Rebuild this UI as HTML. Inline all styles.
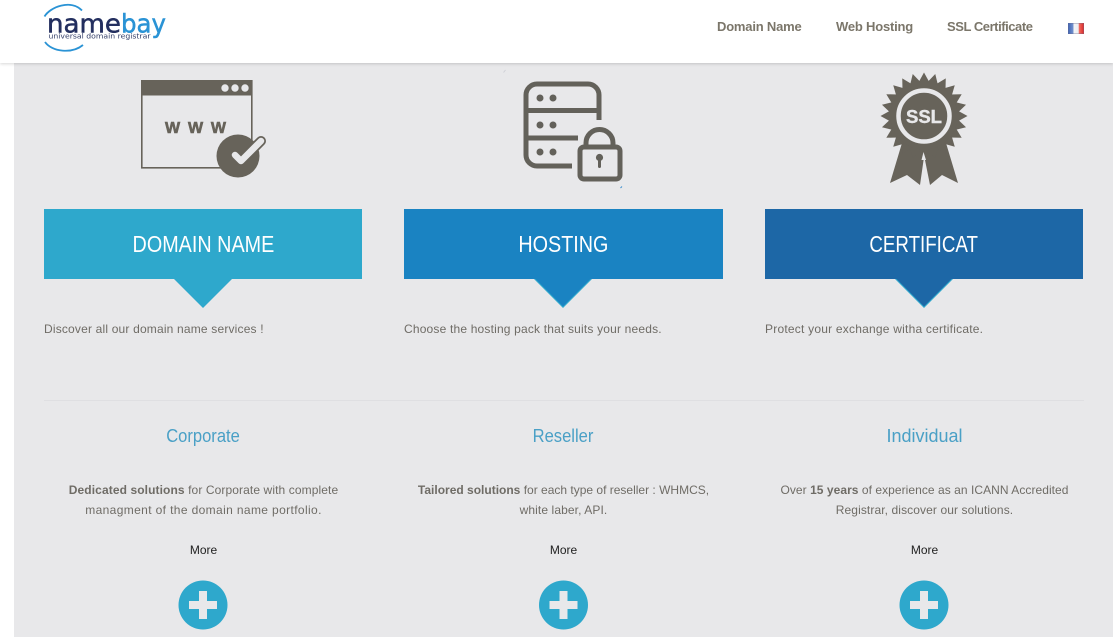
<!DOCTYPE html>
<html lang="en">
<head>
<meta charset="utf-8">
<title>Namebay</title>
<style>
html,body{margin:0;padding:0;background:#fff}
body{width:1113px;height:637px;overflow:hidden;position:relative;font-family:"Liberation Sans",sans-serif}
.main{position:absolute;left:14px;top:63px;width:1099px;height:574px;background:#e8e8ea}
.head{position:absolute;left:0;top:0;width:1113px;height:63px;background:#fff;box-shadow:0 1px 3px rgba(0,0,0,.16)}
.t{position:absolute;white-space:nowrap}
.nav{top:18px;font-size:13px;line-height:17px;font-weight:bold;color:#7b766a}
.flag{position:absolute;left:1068px;top:23px;width:16px;height:11px;background:linear-gradient(90deg,#3b62b4 0,#6f8ecb 30%,#f4f4f6 38%,#eceef2 64%,#f06a60 70%,#d92626 100%);box-shadow:inset 0 0 0 1px rgba(110,110,140,.35)}
.box{position:absolute;top:209px;height:70px;color:#fff;text-align:center;font-size:23px;line-height:71px}
.box span{display:inline-block;transform:scaleX(.86)}
.desc{top:321px;font-size:12px;line-height:16px;color:#6f6c66}
.title{width:319px;top:426px;font-size:18px;line-height:21px;text-align:center;color:#4aa0c6}
.title span{display:inline-block;transform:scaleX(.92)}
.copy{width:319px;top:480px;font-size:12px;line-height:20px;text-align:center;color:#6f6c66;white-space:normal}
.more{width:319px;top:542px;font-size:12px;line-height:16px;text-align:center;color:#222}
svg{position:absolute;left:0;top:0}
</style>
</head>
<body>
<div class="main"></div>
<div class="head"></div>

<svg width="1113" height="637" viewBox="0 0 1113 637" xmlns="http://www.w3.org/2000/svg">
  <!-- logo -->
  <path d="M44.500 16.500C50 7 71 -1 82 10.500" fill="none" stroke="#2a93d5" stroke-width="1.800"/>
  <path d="M45 42C52 52 72 54 83 45" fill="none" stroke="#2a93d5" stroke-width="1.800"/>
  <text x="47" y="32.500" font-family="DejaVu Sans" font-size="25.500" fill="#232f5f" stroke="#232f5f" stroke-width=".5" textLength="74" lengthAdjust="spacingAndGlyphs">name</text>
  <text x="121" y="32.500" font-family="DejaVu Sans" font-size="25.500" fill="#2a93d5" stroke="#2a93d5" stroke-width=".5" textLength="45" lengthAdjust="spacingAndGlyphs">bay</text>
  <text x="48.500" y="38.500" font-family="DejaVu Sans" font-size="6.800" fill="#35406a" textLength="102" lengthAdjust="spacingAndGlyphs">universal domain registrar</text>

  <!-- www icon -->
  <rect x="141.800" y="80.800" width="110" height="87" fill="none" stroke="#67635a" stroke-width="1.600"/>
  <rect x="141" y="80" width="111.500" height="15.500" fill="#67635a"/>
  <circle cx="225" cy="88" r="3.700" fill="#e8e8ea"/>
  <circle cx="235" cy="88" r="3.700" fill="#e8e8ea"/>
  <circle cx="245" cy="88" r="3.700" fill="#e8e8ea"/>
  <text x="165" y="133" font-family="Liberation Sans" font-weight="bold" font-size="16" fill="#67635a" stroke="#67635a" stroke-width=".6" textLength="61" lengthAdjust="spacing">WWW</text>
  <circle cx="238" cy="156" r="21.500" fill="#67635a"/>
  <path d="M235 155L241 161L261 141" fill="none" stroke="#67635a" stroke-width="10" stroke-linecap="round" stroke-linejoin="round"/>
  <path d="M235 155L241 161L261 141" fill="none" stroke="#e8e8ea" stroke-width="6.500" stroke-linecap="round" stroke-linejoin="round"/>

  <!-- server icon -->
  <g fill="none" stroke="#63615a" stroke-width="5">
    <path d="M572 166H537a11 11 0 0 1-11-11V95a11 11 0 0 1 11-11H588a11 11 0 0 1 11 11V120"/>
    <path d="M526 110.500H599M526 138H578"/>
    <rect x="580" y="147" width="40" height="32" rx="4"/>
    <path d="M586 147V143a13.500 13.500 0 0 1 27 0V147"/>
  </g>
  <g fill="#63615a">
    <circle cx="540" cy="98" r="3.500"/><circle cx="553" cy="98" r="3.500"/>
    <circle cx="540" cy="125" r="3.500"/><circle cx="553" cy="125" r="3.500"/>
    <circle cx="540" cy="152" r="3.500"/><circle cx="553" cy="152" r="3.500"/>
    <circle cx="599.500" cy="157.500" r="3.600"/>
    <rect x="598" y="158" width="3" height="10" rx="1.200"/>
  </g>
  <path d="M503.500 72.500L505.500 70" stroke="#cfd0d6" stroke-width="1"/>
  <path d="M620.500 188L622 186.500" stroke="#3d8fcf" stroke-width="1"/>

  <!-- ssl badge -->
  <g fill="#67635a">
    <path d="M902 143L890 183L907 175L920 185L925 150ZM946 143L958 183L942 175L930 185L923 150Z"/>
    <g transform="translate(924 116)">
      <circle r="34.500"/>
      <g id="tooth"><path d="M-5.500 -33.500L0 -43.500L5.500 -33.500Z"/></g>
      <use href="#tooth" transform="rotate(15)"/><use href="#tooth" transform="rotate(30)"/>
      <use href="#tooth" transform="rotate(45)"/><use href="#tooth" transform="rotate(60)"/>
      <use href="#tooth" transform="rotate(75)"/><use href="#tooth" transform="rotate(90)"/>
      <use href="#tooth" transform="rotate(105)"/><use href="#tooth" transform="rotate(120)"/>
      <use href="#tooth" transform="rotate(135)"/><use href="#tooth" transform="rotate(150)"/>
      <use href="#tooth" transform="rotate(165)"/><use href="#tooth" transform="rotate(180)"/>
      <use href="#tooth" transform="rotate(195)"/><use href="#tooth" transform="rotate(210)"/>
      <use href="#tooth" transform="rotate(225)"/><use href="#tooth" transform="rotate(240)"/>
      <use href="#tooth" transform="rotate(255)"/><use href="#tooth" transform="rotate(270)"/>
      <use href="#tooth" transform="rotate(285)"/><use href="#tooth" transform="rotate(300)"/>
      <use href="#tooth" transform="rotate(315)"/><use href="#tooth" transform="rotate(330)"/>
      <use href="#tooth" transform="rotate(345)"/>
    </g>
  </g>
  <path d="M923.500 152L921.500 160H926Z" fill="#e8e8ea"/>
  <circle cx="924" cy="116" r="25.500" fill="none" stroke="#e8e8ea" stroke-width="4.500"/>
  <text x="906" y="123" font-family="Liberation Sans" font-weight="bold" font-size="18" fill="#e8e8ea" stroke="#e8e8ea" stroke-width=".4" textLength="36" lengthAdjust="spacingAndGlyphs">SSL</text>

  <!-- arrows -->
  <path d="M174 279H232L203 308Z" fill="#2ea8cc"/>
  <path d="M534 279H592L563 308Z" fill="#2ea8cc"/>
  <path d="M535.500 279H590.500L563 306.500Z" fill="#1a83c2"/>
  <path d="M895 279H953L924 308Z" fill="#2ea8cc"/>
  <path d="M896.500 279H951.500L924 306.500Z" fill="#1d67a6"/>

  <!-- separator -->
  <rect x="44" y="400" width="1040" height="1" fill="#dfdfe2"/>

  <!-- plus buttons -->
  <g fill="#2ea8cc">
    <circle cx="203" cy="605" r="24.500"/>
    <circle cx="563.500" cy="605" r="24.500"/>
    <circle cx="924" cy="605" r="24.500"/>
  </g>
  <g fill="#e8e8ea">
    <path d="M199 591h8v10h10v8h-10v10h-8v-10h-10v-8h10z"/>
    <path d="M559.500 591h8v10h10v8h-10v10h-8v-10h-10v-8h10z"/>
    <path d="M920 591h8v10h10v8h-10v10h-8v-10h-10v-8h10z"/>
  </g>
</svg>

<div class="t nav" style="left:717px;letter-spacing:-.2px">Domain Name</div>
<div class="t nav" style="left:836px;letter-spacing:-.2px">Web Hosting</div>
<div class="t nav" style="left:947px;letter-spacing:-.45px">SSL Certificate</div>
<div class="flag"></div>

<div class="box" style="left:44px;width:318px;background:#2ea8cc"><span>DOMAIN NAME</span></div>
<div class="box" style="left:404px;width:319px;background:#1a83c2"><span>HOSTING</span></div>
<div class="box" style="left:765px;width:318px;background:#1d67a6"><span style="transform:scaleX(.815)">CERTIFICAT</span></div>

<div class="t desc" style="left:44px;letter-spacing:.18px">Discover all our domain name services !</div>
<div class="t desc" style="left:404px;letter-spacing:.18px">Choose the hosting pack that suits your needs.</div>
<div class="t desc" style="left:765px;letter-spacing:.22px">Protect your exchange witha certificate.</div>

<div class="t title" style="left:44px"><span>Corporate</span></div>
<div class="t title" style="left:404px"><span>Reseller</span></div>
<div class="t title" style="left:765px"><span style="transform:none">Individual</span></div>

<div class="t copy" style="left:44px"><span style="letter-spacing:.1px"><b>Dedicated solutions</b> for Corporate with complete</span><br><span style="letter-spacing:.37px">managment of the domain name portfolio.</span></div>
<div class="t copy" style="left:404px"><b>Tailored solutions</b> for each type of reseller : WHMCS,<br><span style="letter-spacing:.1px">white laber, API.</span></div>
<div class="t copy" style="left:765px"><span style="letter-spacing:.05px">Over <b>15 years</b> of experience as an ICANN Accredited</span><br><span style="letter-spacing:.1px">Registrar, discover our solutions.</span></div>

<div class="t more" style="left:44px">More</div>
<div class="t more" style="left:404px">More</div>
<div class="t more" style="left:765px">More</div>
</body>
</html>
